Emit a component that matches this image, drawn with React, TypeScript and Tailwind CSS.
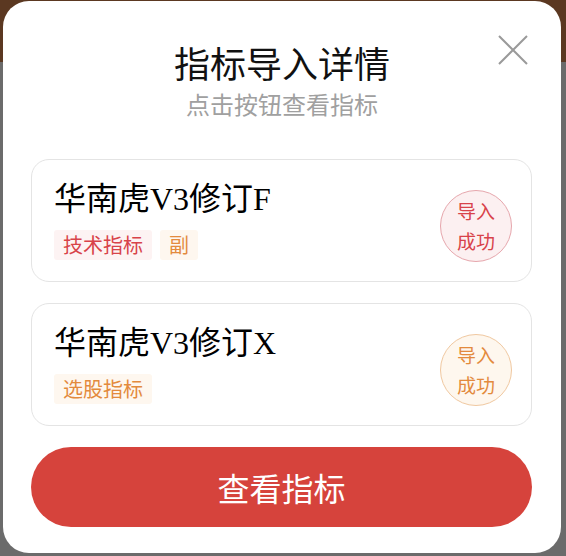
import React from "react";

const cjk = { fontFamily: '"Noto Sans CJK SC", "Noto Sans", sans-serif' };
const mixed = { fontFamily: '"Liberation Serif", "Noto Sans CJK SC", serif' };

type Tag = { text: string; tone: "red" | "orange" };

function Card({ title, tags, tone }: { title: string; tags: Tag[]; tone: "red" | "orange" }) {
  return (
    <div className="mx-[28px] flex h-[123px] w-[501px] items-center justify-between rounded-[18px] border border-[#e4e4e4] bg-white pl-[22px] pr-[19px]">
      <div className="flex flex-col self-start pt-[19px]">
        <div className="text-[32px] leading-[40px] text-black" style={mixed}>
          {title}
        </div>
        <div className="mt-[11px] flex gap-[8px]">
          {tags.map((t) => (
            <span
              key={t.text}
              className={
                t.tone === "red"
                  ? "flex h-[30px] items-center rounded-[3px] bg-[#fdf3f3] px-[9px] text-[20px] text-[#d8434a]"
                  : "flex h-[30px] items-center rounded-[3px] bg-[#fef7ef] px-[9px] text-[20px] text-[#e38a3d]"
              }
              style={cjk}
            >
              {t.text}
            </span>
          ))}
        </div>
      </div>
      <div
        className={
          tone === "red"
            ? "mt-[10px] flex h-[72px] w-[72px] flex-col items-center justify-center rounded-full border border-[#e6a6ac] bg-[#fcf0f1] text-[19px] leading-[30px] text-[#d8434a]"
            : "mt-[10px] flex h-[72px] w-[72px] flex-col items-center justify-center rounded-full border border-[#f0c8a0] bg-[#fef7ee] text-[19px] leading-[30px] text-[#e38a3d]"
        }
        style={cjk}
      >
        <span>导入</span>
        <span>成功</span>
      </div>
    </div>
  );
}

export default function App() {
  return (
    <div className="h-[556px] w-[566px] overflow-hidden bg-[linear-gradient(to_bottom,#5b3821_0px,#5b3821_62px,#6b6b6b_62px,#6b6b6b_100%)] pl-[3px] pt-[1px]">
      <div className="relative flex h-[552px] w-[558px] flex-col rounded-[26px] bg-white" style={cjk}>
        <button className="absolute right-[33px] top-[34px] h-[30px] w-[30px]" aria-label="close">
          <svg width="30" height="30" viewBox="0 0 30 30">
            <path d="M1 1 L29 29 M29 1 L1 29" stroke="#9a9a9a" strokeWidth="2" fill="none" />
          </svg>
        </button>
        <div className="pt-[39px] text-center text-[36px] leading-[44px] text-[#111]">指标导入详情</div>
        <div className="mt-[4px] text-center text-[24px] leading-[32px] text-[#a0a0a0]">点击按钮查看指标</div>
        <div className="mt-[39px] flex flex-col gap-[21px]">
          <Card
            title="华南虎V3修订F"
            tone="red"
            tags={[
              { text: "技术指标", tone: "red" },
              { text: "副", tone: "orange" },
            ]}
          />
          <Card title="华南虎V3修订X" tone="orange" tags={[{ text: "选股指标", tone: "orange" }]} />
        </div>
        <button className="mx-[28px] mt-[21px] flex h-[80px] w-[501px] items-center justify-center rounded-full bg-[#d6433c] text-[32px] text-white">
          查看指标
        </button>
      </div>
    </div>
  );
}
